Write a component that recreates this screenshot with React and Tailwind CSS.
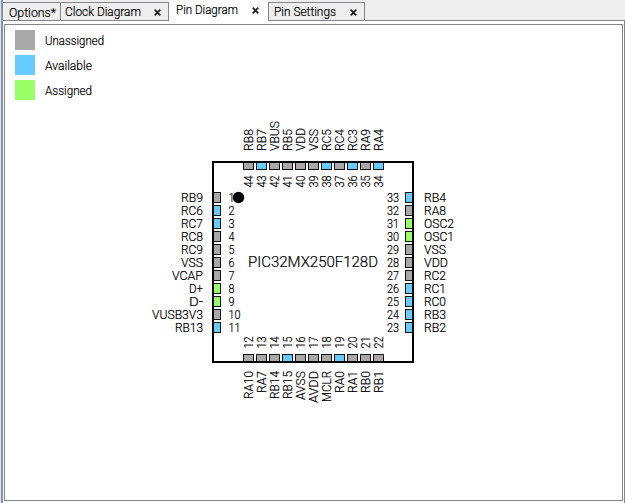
const COLORS = { u: '#a9a7a8', a: '#66ccff', g: '#99ff66' };

// Each pin: number, name, state, length of the name in pixels
const LEFT = [
  [1, 'RB9', 'u', 22], [2, 'RC6', 'a', 22], [3, 'RC7', 'a', 22], [4, 'RC8', 'u', 22],
  [5, 'RC9', 'u', 22], [6, 'VSS', 'u', 22], [7, 'VCAP', 'u', 31], [8, 'D+', 'g', 14],
  [9, 'D-', 'g', 14], [10, 'VUSB3V3', 'u', 51], [11, 'RB13', 'a', 28],
];
const RIGHT = [
  [33, 'RB4', 'a', 22], [32, 'RA8', 'u', 22], [31, 'OSC2', 'g', 30], [30, 'OSC1', 'g', 30],
  [29, 'VSS', 'u', 22], [28, 'VDD', 'u', 24], [27, 'RC2', 'u', 22], [26, 'RC1', 'a', 22],
  [25, 'RC0', 'a', 22], [24, 'RB3', 'a', 22], [23, 'RB2', 'a', 22],
];
const TOP = [
  [44, 'RB8', 'u', 22], [43, 'RB7', 'a', 22], [42, 'VBUS', 'u', 30], [41, 'RB5', 'u', 22],
  [40, 'VDD', 'u', 23], [39, 'VSS', 'u', 22], [38, 'RC5', 'a', 22], [37, 'RC4', 'u', 22],
  [36, 'RC3', 'a', 22], [35, 'RA9', 'u', 22], [34, 'RA4', 'a', 22],
];
const BOTTOM = [
  [12, 'RA10', 'u', 28], [13, 'RA7', 'u', 22], [14, 'RB14', 'u', 28], [15, 'RB15', 'a', 28],
  [16, 'AVSS', 'u', 29], [17, 'AVDD', 'u', 32], [18, 'MCLR', 'u', 31], [19, 'RA0', 'a', 22],
  [20, 'RA1', 'u', 22], [21, 'RB0', 'u', 22], [22, 'RB1', 'u', 22],
];

function Label({ x, y, len, anchor = 'start', vertical, size = 12.2, children }) {
  return (
    <text
      x={vertical ? 0 : x}
      y={vertical ? 0 : y}
      transform={vertical ? `translate(${x} ${y}) rotate(-90)` : undefined}
      fontSize={size}
      textAnchor={anchor}
      textLength={len}
      lengthAdjust="spacingAndGlyphs"
      stroke="#000"
      strokeWidth="0.2"
    >
      {children}
    </text>
  );
}

function Pin({ x, y, w, h, state }) {
  return <rect x={x} y={y} width={w} height={h} fill={COLORS[state]} stroke="#111" />;
}

function Chip() {
  return (
    <svg width="320" height="300" viewBox="145 115 320 300" className="block" fill="#000">
      {LEFT.map(([n, name, s, len], i) => (
        <g key={n}>
          <Pin x={213.5} y={192.5 + i * 13} w={7} h={10} state={s} />
          <Label x={203} y={202 + i * 13} len={len} anchor="end">{name}</Label>
          <Label x={228.5} y={202 + i * 13} len={n > 9 ? 12 : 6}>{n}</Label>
        </g>
      ))}
      {RIGHT.map(([n, name, s, len], i) => (
        <g key={n}>
          <Pin x={405.5} y={192.5 + i * 13} w={7} h={10} state={s} />
          <Label x={424} y={202 + i * 13} len={len}>{name}</Label>
          <Label x={387} y={202 + i * 13} len={12}>{n}</Label>
        </g>
      ))}
      {TOP.map(([n, name, s, len], i) => (
        <g key={n}>
          <Pin x={243.5 + i * 13} y={162.5} w={10} h={7} state={s} />
          <Label x={252.5 + i * 13} y={151} len={len} vertical>{name}</Label>
          <Label x={252.5 + i * 13} y={187.5} len={12} vertical>{n}</Label>
        </g>
      ))}
      {BOTTOM.map(([n, name, s, len], i) => (
        <g key={n}>
          <Pin x={243.5 + i * 13} y={354.5} w={10} h={7} state={s} />
          <Label x={252.5 + i * 13} y={371} len={len} anchor="end" vertical>{name}</Label>
          <Label x={252.5 + i * 13} y={348.5} len={12} vertical>{n}</Label>
        </g>
      ))}
      <rect x="213" y="162" width="200" height="200" fill="none" stroke="#000" strokeWidth="2" />
      <circle cx="238.5" cy="197.5" r="5.7" />
      <Label x={248} y={267} len={130} size={14.6}>PIC32MX250F128D</Label>
    </svg>
  );
}

function Text({ width, children }) {
  return (
    <svg width={width} height="16" className="block shrink-0 overflow-visible" fill="#000">
      <Label x={0} y={12} len={width}>{children}</Label>
    </svg>
  );
}

function Close() {
  return (
    <svg width="7" height="7" viewBox="0 0 7 7" className="block" stroke="#222" strokeWidth="1.8">
      <path d="M.7.7 6.3 6.3M6.3.7.7 6.3" />
    </svg>
  );
}

export default function App() {
  return (
    <div className="flex h-[503px] w-[625px] overflow-hidden bg-white font-['Roboto','Liberation_Sans',sans-serif] font-light text-black">
      <div className="w-[3px] shrink-0 border-l border-[#dfe5ee] bg-[#8793ab]" />
      <div className="flex min-w-0 grow flex-col">
        <div className="flex h-[21px] shrink-0 items-end bg-[#eeeeee]">
          <div className="flex h-[19px] w-[58px] border border-l-0 border-[#858589] pt-[2px] pl-[6px]">
            <Text width={47}>Options*</Text>
          </div>
          <div className="flex h-[19px] w-[108px] border border-l-0 border-[#858589] pt-px pl-[4px]">
            <Text width={76}>Clock Diagram</Text>
            <div className="ml-[13px] pt-[5px]"><Close /></div>
          </div>
          <div className="flex h-[21px] w-[99px] bg-white pt-[2px] pl-[7px]">
            <Text width={62}>Pin Diagram</Text>
            <div className="ml-[14px] pt-[5px]"><Close /></div>
          </div>
          <div className="flex h-[19px] w-[97px] border border-[#858589] pt-px pl-[5px]">
            <Text width={62}>Pin Settings</Text>
            <div className="ml-[14px] pt-[5px]"><Close /></div>
          </div>
          <div className="h-full grow border-b border-[#858589]" />
        </div>
        <div className="flex grow flex-col border-r border-[#858589] pt-[3px] pr-px pb-[2px] pl-px">
          <div className="grow border border-[#858589]">
            <div className="flex flex-col gap-[5px] pt-[5px] pl-[10px]">
              <div className="flex h-5 gap-[10px]">
                <div className="w-5 bg-[#a9a9a9]" />
                <div className="pt-[3px]"><Text width={59}>Unassigned</Text></div>
              </div>
              <div className="flex h-5 gap-[10px]">
                <div className="w-5 bg-[#66ccff]" />
                <div className="pt-[3px]"><Text width={47}>Available</Text></div>
              </div>
              <div className="flex h-5 gap-[10px]">
                <div className="w-5 bg-[#99ff66]" />
                <div className="pt-[3px]"><Text width={47}>Assigned</Text></div>
              </div>
            </div>
            <div className="mt-[15px] ml-[140px]">
              <Chip />
            </div>
          </div>
        </div>
      </div>
    </div>
  );
}
